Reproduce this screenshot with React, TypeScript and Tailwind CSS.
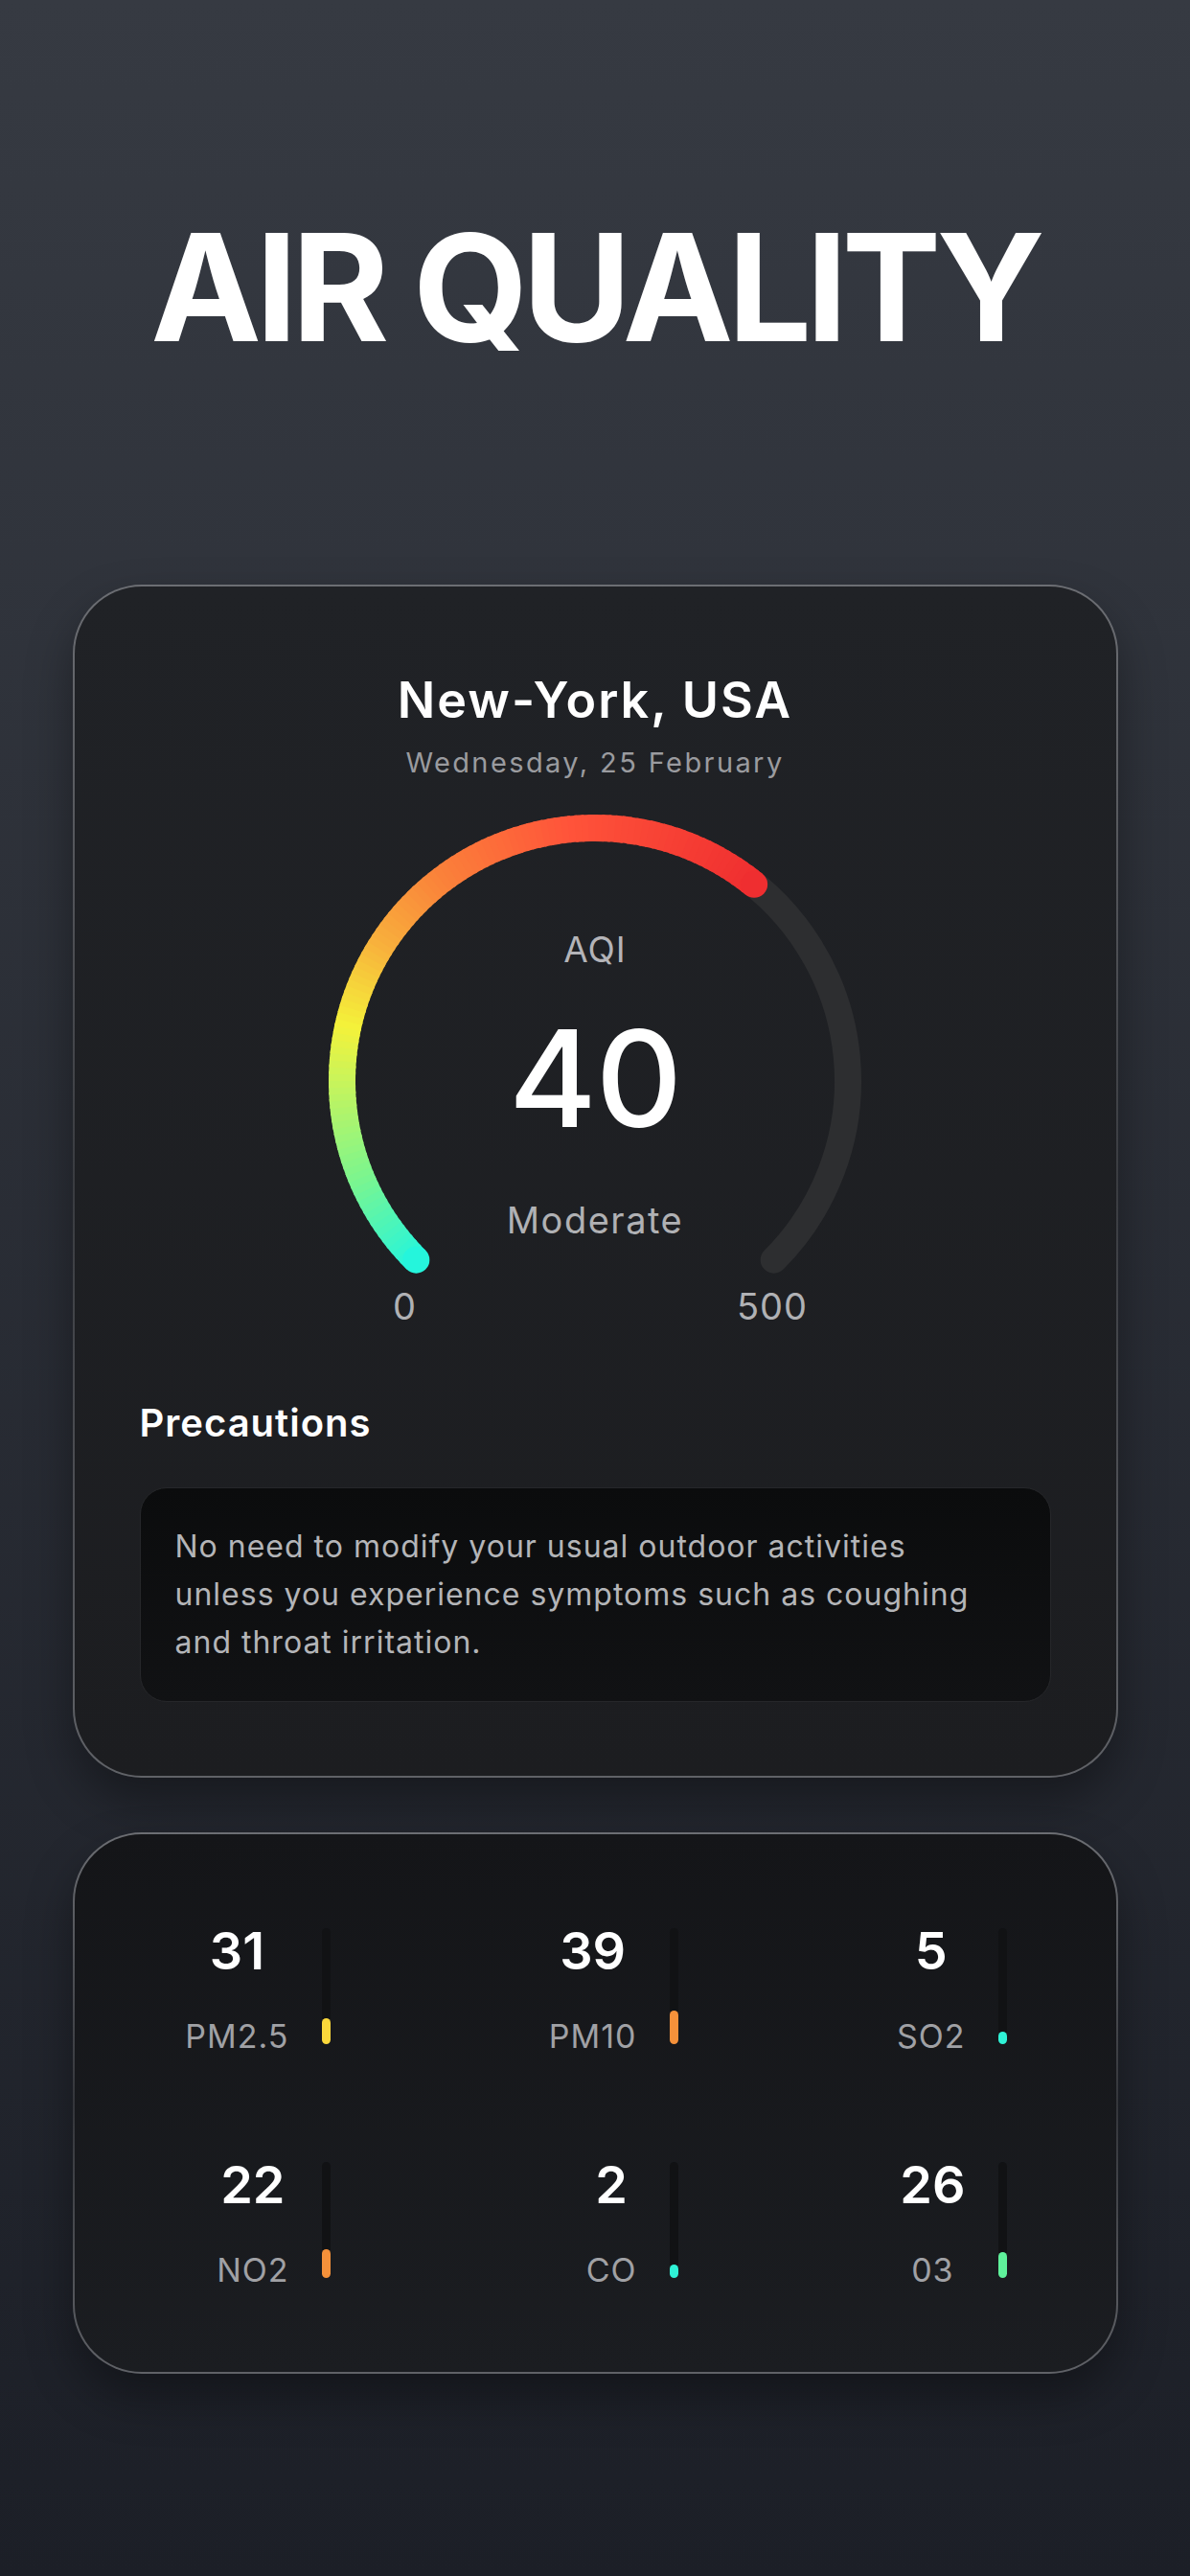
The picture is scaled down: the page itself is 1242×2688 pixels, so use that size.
import React from "react";

const FONT = { fontFamily: "Inter, 'Noto Sans', sans-serif" };

// colour stops along the coloured part of the gauge (0 = bottom-left end)
const STOPS: [number, string][] = [
  [0, "#25f5dc"],
  [0.13, "#7cf58e"],
  [0.26, "#c9f45a"],
  [0.33, "#f4f23a"],
  [0.45, "#f8ae3c"],
  [0.56, "#fa823a"],
  [0.74, "#ff543a"],
  [1, "#ef2e30"],
];

const POLLUTANTS = [
  { value: "31", label: "PM2.5", color: "#fbd83b", fill: 27 },
  { value: "39", label: "PM10", color: "#f5913a", fill: 35 },
  { value: "5", label: "SO2", color: "#2ff2d6", fill: 13 },
  { value: "22", label: "NO2", color: "#f5913a", fill: 30 },
  { value: "2", label: "CO", color: "#2ff2d6", fill: 14 },
  { value: "26", label: "03", color: "#5ff29b", fill: 27 },
];

function hex(c: string) {
  return [1, 3, 5].map((i) => parseInt(c.slice(i, i + 2), 16));
}

function colorAt(t: number) {
  for (let i = 1; i < STOPS.length; i++) {
    const [t1, c1] = STOPS[i];
    const [t0, c0] = STOPS[i - 1];
    if (t <= t1) {
      const k = (t - t0) / (t1 - t0);
      const a = hex(c0);
      const b = hex(c1);
      const m = a.map((v, j) => Math.round(v + (b[j] - v) * k));
      return `rgb(${m[0]},${m[1]},${m[2]})`;
    }
  }
  return STOPS[STOPS.length - 1][1];
}

function Gauge() {
  const cx = 300;
  const cy = 300;
  const r = 264;
  const sw = 28;
  const start = 135;
  const end = 405;
  const valueEnd = 309;

  const pt = (a: number) => [
    cx + r * Math.cos((a * Math.PI) / 180),
    cy + r * Math.sin((a * Math.PI) / 180),
  ];
  const arc = (a0: number, a1: number) => {
    const [x0, y0] = pt(a0);
    const [x1, y1] = pt(a1);
    return `M ${x0} ${y0} A ${r} ${r} 0 ${a1 - a0 > 180 ? 1 : 0} 1 ${x1} ${y1}`;
  };

  const segs = [];
  const step = 1.5;
  for (let a = start; a < valueEnd; a += step) {
    const a1 = Math.min(a + step + 0.6, valueEnd);
    const t = (a + step / 2 - start) / (valueEnd - start);
    segs.push(
      <path key={a} d={arc(a, a1)} stroke={colorAt(Math.min(t, 1))} strokeWidth={sw} fill="none" />
    );
  }
  const [sx, sy] = pt(start);
  const [ex, ey] = pt(valueEnd);

  return (
    <div className="relative mt-[18px] h-[554px] w-[600px]">
      <svg width="600" height="554" className="absolute inset-0">
        <path d={arc(valueEnd - 5, end)} stroke="#2d2e30" strokeWidth={sw} strokeLinecap="round" fill="none" />
        {segs}
        <circle cx={sx} cy={sy} r={sw / 2} fill={colorAt(0)} />
        <circle cx={ex} cy={ey} r={sw / 2} fill={colorAt(1)} />
      </svg>
      <div className="absolute inset-x-0 top-[144px] flex flex-col items-center">
        <span className="text-[37px] leading-none tracking-[1px] text-[#b4b4b8]">AQI</span>
        <span className="mt-[46px] text-[140px] font-medium leading-none tracking-[-1px] text-white">40</span>
        <span className="mt-[59px] text-[38px] leading-none tracking-[1.5px] text-[#b0b1b4]">Moderate</span>
      </div>
      <span className="absolute left-[101px] top-[516px] -translate-x-1/2 text-[38px] leading-none text-[#b0b1b4]">0</span>
      <span className="absolute left-[485px] top-[516px] -translate-x-1/2 text-[38px] leading-none tracking-[1px] text-[#b0b1b4]">500</span>
    </div>
  );
}

function Pollutant({ p }: { p: (typeof POLLUTANTS)[number] }) {
  return (
    <div className="flex items-start gap-[34px]">
      <div className="flex flex-col items-center">
        <span className="text-[54px] font-semibold leading-none text-white">{p.value}</span>
        <span className="mt-[45px] text-[34px] leading-none tracking-[1px] text-[#a0a1a5]">{p.label}</span>
      </div>
      <div className="mt-[3px] flex h-[121px] w-[9px] flex-col justify-end rounded-full bg-[#111214]">
        <div className="w-full rounded-full" style={{ height: p.fill, background: p.color }} />
      </div>
    </div>
  );
}

export default function App() {
  return (
    <div
      style={FONT}
      className="flex min-h-[2688px] w-full flex-col items-center bg-gradient-to-b from-[#363a42] to-[#1c1f27] pb-[209px]"
    >
      <h1 className="pt-[222px] text-[155px] font-bold leading-none tracking-[-6px] text-white">AIR QUALITY</h1>

      <div className="mt-[233px] w-[1091px] rounded-[72px] bg-gradient-to-b from-[#6c6e73] via-[#3a3c41] to-[#606267] p-[2px] shadow-[0_24px_48px_rgba(0,0,0,0.35)]">
        <div className="flex flex-col items-center rounded-[70px] bg-gradient-to-b from-[#202226] to-[#1c1d20] px-[68px] pb-[77px] pt-[93px]">
          <h2 className="text-[52px] font-semibold leading-none tracking-[2px] text-white">New-York, USA</h2>
          <p className="mt-[24px] text-[29px] leading-none tracking-[2.4px] text-[#9a9b9f]">Wednesday, 25 February</p>
          <Gauge />
          <div className="mt-[83px] w-full">
            <h3 className="text-[40px] font-semibold leading-none tracking-[1px] text-white">Precautions</h3>
            <div className="mt-[47px] rounded-[28px] border border-[#26272a] bg-gradient-to-b from-[#0b0c0d] to-[#111214] px-[36px] py-[36px]">
              <p className="whitespace-nowrap text-[32px] leading-[50px] tracking-[1px] text-[#b4b5b8]">
                No need to modify your usual outdoor activities
                <br />
                unless you experience symptoms such as coughing
                <br />
                and throat irritation.
              </p>
            </div>
          </div>
        </div>
      </div>

      <div className="mt-[57px] w-[1091px] rounded-[72px] bg-gradient-to-b from-[#6c6e73] via-[#34363b] to-[#606267] p-[2px] shadow-[0_24px_48px_rgba(0,0,0,0.35)]">
        <div className="grid grid-cols-[153px_363px_343px] justify-items-end gap-y-[111px] rounded-[70px] bg-gradient-to-b from-[#141518] to-[#1b1d21] px-[114px] pb-[89px] pt-[95px]">
          {POLLUTANTS.map((p) => (
            <Pollutant key={p.label} p={p} />
          ))}
        </div>
      </div>
    </div>
  );
}
